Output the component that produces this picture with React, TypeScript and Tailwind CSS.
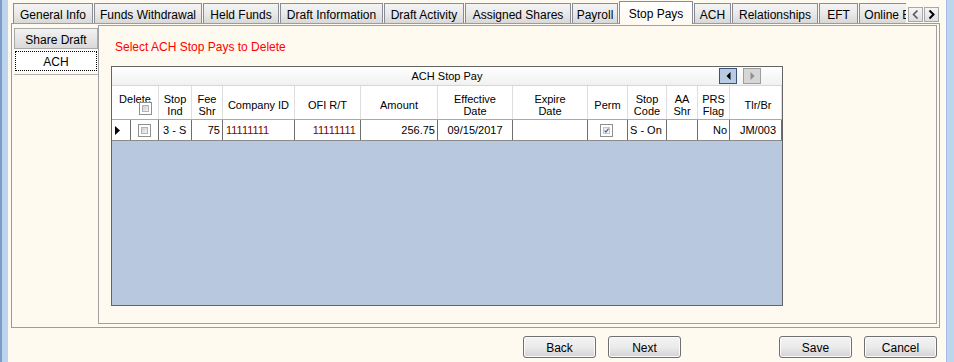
import type { ReactNode } from "react";

const tabs = [
  { label: "General Info", width: "w-[80px]" },
  { label: "Funds Withdrawal", width: "w-[108px]" },
  { label: "Held Funds", width: "w-[76px]" },
  { label: "Draft Information", width: "w-[103px]" },
  { label: "Draft Activity", width: "w-[80px]" },
  { label: "Assigned Shares", width: "w-[106px]" },
  { label: "Payroll", width: "w-[46px]" },
  { label: "Stop Pays", width: "w-[74px]", selected: true },
  { label: "ACH", width: "w-[37px]" },
  { label: "Relationships", width: "w-[86px]" },
  { label: "EFT", width: "w-[39px]" },
  { label: "Online Banking", width: "w-[92px]" },
];

function Check({ checked = false }: { checked?: boolean }) {
  return (
    <span className="flex h-[13px] w-[13px] shrink-0 border border-[#8e8f8f] bg-white p-[2px]">
      <span
        className={
          checked
            ? "flex h-full w-full items-center justify-center border border-[#c3c6cc] bg-linear-to-br from-[#e4e6ea] to-[#fbfbfb]"
            : "flex h-full w-full border border-[#b3b3b3] bg-linear-to-br from-[#cfcfcf] to-[#f4f4f4]"
        }
      >
        {checked && (
          <svg width="7" height="7" viewBox="0 0 7 7">
            <path d="M0.8 3.6 L2.7 5.6 L6.3 0.9" fill="none" stroke="#4b5f8c" strokeWidth="1.6" />
          </svg>
        )}
      </span>
    </span>
  );
}

function HeadCell({ w, children, last = false }: { w: string; children: ReactNode; last?: boolean }) {
  return (
    <div
      className={`flex ${w} shrink-0 items-center justify-center pt-[5px] text-center leading-[12px] ${
        last ? "" : "border-r border-[#dedede]"
      }`}
    >
      {children}
    </div>
  );
}

function Cell({ w, children, align = "justify-center", pad = "" }: { w: string; children?: ReactNode; align?: string; pad?: string }) {
  return (
    <div className={`flex ${w} shrink-0 items-center border-r border-[#6e6e6e] ${align} ${pad}`}>
      {children}
    </div>
  );
}

function WinButton({ children }: { children: ReactNode }) {
  return (
    <button className="flex h-[22px] w-[73px] items-center justify-center rounded-[3px] border border-[#707070] bg-linear-to-b from-[#f3f3f3] via-[#ebebeb] to-[#d3d3d3] pt-[1px] text-[12px] text-black shadow-[inset_0_0_0_1px_#fbfbfb]">
      {children}
    </button>
  );
}

export default function App() {
  return (
    <div className="flex h-[362px] w-[954px] overflow-hidden bg-[#fffaf0] font-['Liberation_Sans',Arial,sans-serif] text-[12px] text-black">
      <div className="flex w-[8px] shrink-0">
        <div className="w-[2px] bg-[#7d9dc9]" />
        <div className="flex-1 bg-[#bcd4ee]" />
      </div>

      <div className="flex w-[938px] shrink-0 flex-col">
        {/* tab strip */}
        <div className="relative z-10 -mb-px flex h-[24px] items-end pl-[5px]">
          <div className="flex h-full w-[893px] items-end gap-[1px] overflow-hidden">
            {tabs.map((t) =>
              t.selected ? (
                <div
                  key={t.label}
                  className={`flex h-[23px] ${t.width} shrink-0 items-start justify-center border border-b-0 border-[#898c95] bg-linear-to-b from-white to-[#fffaf0] pt-[3px] whitespace-nowrap`}
                >
                  {t.label}
                </div>
              ) : (
                <div
                  key={t.label}
                  className={`mb-[1px] flex h-[20px] ${t.width} shrink-0 items-center justify-center border border-b-0 border-[#898c95] bg-linear-to-b from-[#f4f4f4] via-[#e9e9e9] to-[#d8d8d8] pt-[2px] whitespace-nowrap`}
                >
                  {t.label}
                </div>
              )
            )}
          </div>
          <div className="mb-[1px] ml-[2px] flex gap-[1px] self-end pb-[1px]">
            <span className="flex h-[15px] w-[15px] items-center justify-center border border-[#a7a7a7] bg-linear-to-b from-[#f6f6f6] to-[#dedede]">
              <svg width="9" height="11" viewBox="0 0 9 11">
                <path d="M6.5 1.5 L2.5 5.5 L6.5 9.5" fill="none" stroke="#555" strokeWidth="1.6" />
              </svg>
            </span>
            <span className="flex h-[15px] w-[15px] items-center justify-center border border-[#a7a7a7] bg-linear-to-b from-[#f6f6f6] to-[#dedede]">
              <svg width="9" height="11" viewBox="0 0 9 11">
                <path d="M2.5 1.5 L6.5 5.5 L2.5 9.5" fill="none" stroke="#000" strokeWidth="2" />
              </svg>
            </span>
          </div>
        </div>

        {/* tab page */}
        <div className="ml-[3px] flex h-[305px] w-[929px] border border-[#9a9ca3]">
          <div className="flex w-[86px] shrink-0 flex-col">
            <div className="ml-[2px] mt-[4px] flex h-[21px] w-[84px] items-center justify-center border border-[#a9a9a9] bg-linear-to-b from-[#f2f2f2] to-[#d9d9d9] pt-[2px]">
              Share Draft
            </div>
            <div className="ml-[2px] mt-[1px] h-[22px] w-[84px] bg-white p-[1px]">
              <div className="flex h-full items-center justify-center border border-dotted border-black pt-[2px]">
                ACH
              </div>
            </div>
            <div className="ml-[2px] mt-[2px] w-[84px] border-t border-[#b0b0b0]" />
          </div>

          <div className="mt-[1px] flex h-[299px] w-[839px] shrink-0 flex-col border border-[#a0a0a0]">
            <div className="pl-[16px] pt-[14px] leading-[14px] text-[#ff0000]">
              Select ACH Stop Pays to Delete
            </div>

            {/* grid */}
            <div className="ml-[12px] mt-[12px] flex h-[240px] w-[672px] flex-col border border-[#646464] bg-[#b8c8df] text-[11px]">
              <div className="grid h-[19px] shrink-0 grid-cols-[1fr_auto_1fr] items-center border-b border-[#d6d6d6] bg-linear-to-b from-white to-[#f1f1f1]">
                <div />
                <div className="leading-[12px]">ACH Stop Pay</div>
                <div className="mr-[21px] flex gap-[6px] justify-self-end">
                  <span className="flex h-[16px] w-[18px] items-center justify-center border border-[#3d5275] bg-[#b9cbe3]">
                    <svg width="5" height="8" viewBox="0 0 5 8">
                      <path d="M4.5 0 L0.5 4 L4.5 8 Z" fill="#000" />
                    </svg>
                  </span>
                  <span className="flex h-[16px] w-[18px] items-center justify-center border border-[#9d9d9d] bg-[#d6d6d6]">
                    <svg width="5" height="8" viewBox="0 0 5 8">
                      <path d="M0.5 0 L4.5 4 L0.5 8 Z" fill="#8d8d8d" />
                    </svg>
                  </span>
                </div>
              </div>

              {/* column headers */}
              <div className="flex h-[34px] shrink-0 border-b border-[#a9a9a9] bg-white">
                <div className="flex w-[47px] shrink-0 flex-col border-r border-[#dedede] pt-[7px]">
                  <div className="text-center leading-[12px]">Delete</div>
                  <div className="-mt-[3px] ml-[27px]">
                    <Check />
                  </div>
                </div>
                <HeadCell w="w-[33px]">
                  Stop
                  <br />
                  Ind
                </HeadCell>
                <HeadCell w="w-[31px]">
                  Fee
                  <br />
                  Shr
                </HeadCell>
                <HeadCell w="w-[72px]">Company ID</HeadCell>
                <HeadCell w="w-[66px]">OFI R/T</HeadCell>
                <HeadCell w="w-[77px]">Amount</HeadCell>
                <HeadCell w="w-[75px]">
                  Effective
                  <br />
                  Date
                </HeadCell>
                <HeadCell w="w-[75px]">
                  Expire
                  <br />
                  Date
                </HeadCell>
                <HeadCell w="w-[40px]">Perm</HeadCell>
                <HeadCell w="w-[39px]">
                  Stop
                  <br />
                  Code
                </HeadCell>
                <HeadCell w="w-[31px]">
                  AA
                  <br />
                  Shr
                </HeadCell>
                <HeadCell w="w-[32px]">
                  PRS
                  <br />
                  Flag
                </HeadCell>
                <HeadCell w="w-[52px]">
                  <span className="pl-[5px]">Tlr/Br</span>
                </HeadCell>
              </div>

              {/* data row */}
              <div className="flex h-[21px] shrink-0 border-b border-[#8a8a8a] bg-white">
                <Cell w="w-[19px]" align="justify-start" pad="pl-[3px]">
                  <svg width="5" height="9" viewBox="0 0 5 9">
                    <path d="M0 0 L5 4.5 L0 9 Z" fill="#000" />
                  </svg>
                </Cell>
                <Cell w="w-[28px]" align="justify-start" pad="pl-[7px]">
                  <Check />
                </Cell>
                <Cell w="w-[33px]" align="justify-start" pad="pl-[4px]">
                  3 - S
                </Cell>
                <Cell w="w-[31px]" align="justify-end" pad="pr-[2px]">
                  75
                </Cell>
                <Cell w="w-[72px]" align="justify-start" pad="pl-[3px] text-[#800000]">
                  11111111
                </Cell>
                <Cell w="w-[66px]" align="justify-end" pad="pr-[4px] text-[#800000]">
                  11111111
                </Cell>
                <Cell w="w-[77px]" align="justify-end" pad="pr-[2px]">
                  256.75
                </Cell>
                <Cell w="w-[75px]">09/15/2017</Cell>
                <Cell w="w-[75px]" />
                <Cell w="w-[40px]" align="justify-start" pad="pl-[12px]">
                  <Check checked />
                </Cell>
                <Cell w="w-[39px]" align="justify-start" pad="pl-[2px]">
                  S - On
                </Cell>
                <Cell w="w-[31px]" />
                <Cell w="w-[32px]" align="justify-end" pad="pr-[2px]">
                  No
                </Cell>
                <Cell w="w-[52px]" pad="pl-[5px]">
                  JM/003
                </Cell>
              </div>

              <div className="flex-1" />
            </div>
          </div>
        </div>

        {/* bottom buttons */}
        <div className="mt-[8px] flex pl-[515px]">
          <WinButton>Back</WinButton>
          <div className="ml-[12px]">
            <WinButton>Next</WinButton>
          </div>
          <div className="ml-[98px]">
            <WinButton>Save</WinButton>
          </div>
          <div className="ml-[12px]">
            <WinButton>Cancel</WinButton>
          </div>
        </div>
      </div>

      <div className="w-[8px] shrink-0 border-l border-[#a3bfe2] bg-[#bdd5ef]" />
    </div>
  );
}
